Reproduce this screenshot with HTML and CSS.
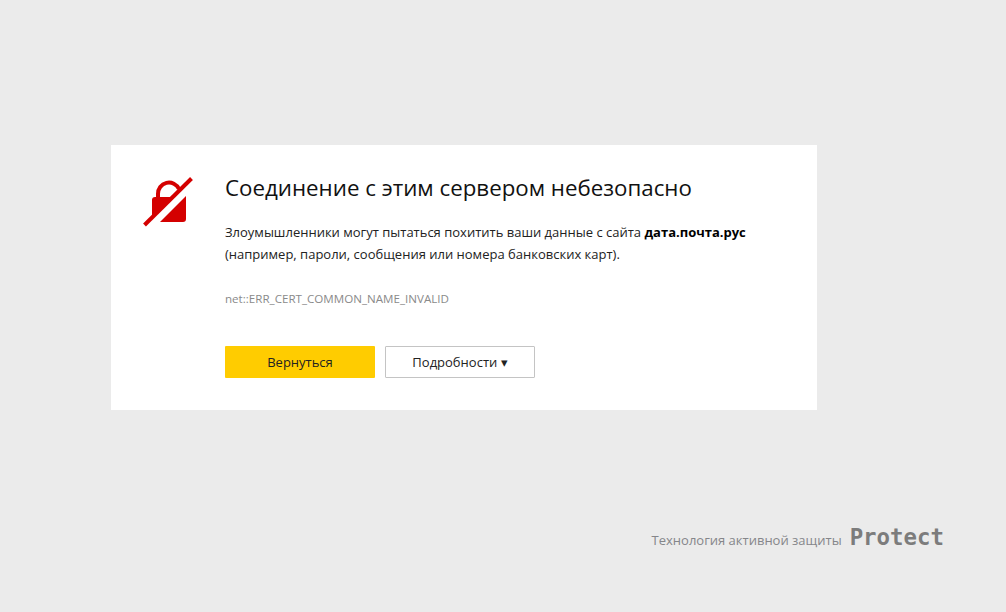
FILE: index.html
```html
<!DOCTYPE html>
<html lang="ru">
<head>
    <meta charset="UTF-8">
    <title>Соединение небезопасно</title>
    <link rel="stylesheet" href="styles.css">
</head>
<body>

    <!-- Warning card -->
    <section class="card">
        <svg class="lock-icon" width="50" height="50" viewBox="0 0 50 50">
            <path d="M9 23a3 3 0 0 1 3-3H30L9 41V23z M43 19V42a3 3 0 0 1-3 3H17z" fill="#d40000"/>
            <path d="M15 21v-4a11 11 0 0 1 21-5" fill="none" stroke="#d40000" stroke-width="4"/>
            <path d="M1.500 48L48.500 1.500" stroke="#d40000" stroke-width="4"/>
        </svg>
        <div class="content">
            <h1>Соединение с этим сервером небезопасно</h1>
            <p class="message">Злоумышленники могут пытаться похитить ваши данные с сайта <b>дата.почта.рус</b> (например, пароли, сообщения или номера банковских карт).</p>
            <p class="code">net::ERR_CERT_COMMON_NAME_INVALID</p>
            <div class="buttons">
                <button class="btn btn-back">Вернуться</button>
                <button class="btn btn-details">Подробности <span class="arrow">▾</span></button>
            </div>
        </div>
    </section>

    <!-- Protect label -->
    <footer class="protect">
        <span>Технология активной защиты</span>
        <span class="protect-logo">Protect</span>
    </footer>

</body>
</html>
```

FILE: styles.css
```css
* {
    margin: 0;
    padding: 0;
    box-sizing: border-box;
}

body {
    font-family: "Open Sans", Arial, sans-serif;
    background-color: #ebebeb;
    color: #000;
    height: 612px;
    overflow: hidden;
    padding-top: 145px;
}

/* Card */
.card {
    display: flex;
    width: 706px;
    height: 265px;
    margin-left: 111px;
    padding: 32px;
    background-color: #fff;
}

.lock-icon {
    flex: none;
    margin-right: 32px;
}

.content {
    flex: 1;
}

h1 {
    font-size: 22.300px;
    font-weight: 400;
    line-height: 24px;
    margin-top: -1px;
    margin-bottom: 21px;
    color: #111;
}

.message {
    font-size: 13px;
    line-height: 22px;
    color: #222;
    width: 530px;
}

.message b {
    font-weight: 700;
    color: #000;
}

.code {
    font-size: 11.600px;
    line-height: 16px;
    margin-top: 26px;
    color: #8a8a8a;
}

/* Buttons */
.buttons {
    display: flex;
    gap: 10px;
    margin-top: 39px;
}

.btn {
    width: 150px;
    height: 32px;
    font-family: inherit;
    font-size: 13px;
    color: #222;
    border-radius: 1px;
}

.btn-back {
    background-color: #ffcc00;
    border: none;
}

.btn-details {
    background-color: #fff;
    border: 1px solid #c4c4c4;
}

.arrow {
    font-size: 13px;
}

/* Protect label */
.protect {
    display: flex;
    justify-content: flex-end;
    align-items: baseline;
    gap: 8px;
    margin-top: 114px;
    padding-right: 62px;
    font-size: 13px;
    color: #85868a;
}

.protect-logo {
    font-family: "DejaVu Sans Mono", monospace;
    font-size: 22.400px;
    font-weight: 700;
    color: #7c7c7c;
}
```
